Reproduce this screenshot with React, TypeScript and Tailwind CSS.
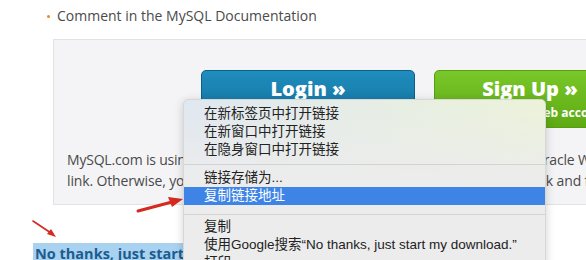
import React from 'react';

const menuGroups: string[][] = [
  ['在新标签页中打开链接', '在新窗口中打开链接', '在隐身窗口中打开链接'],
  ['链接存储为...', '复制链接地址'],
  ['复制', '使用Google搜索“No thanks, just start my download.”', '打印'],
];

const App: React.FC = () => {
  return (
    <div className="relative w-[586px] h-[260px] overflow-hidden bg-white font-['Open_Sans',sans-serif]">
      {/* bullet line */}
      <div className="flex items-center h-[20px] mt-[5px] pl-[47px] text-[14px] text-[#4a4a4a]">
        <span className="w-[3px] h-[3px] rounded-full bg-[#e8892b] mr-[7px] mt-[2px]"></span>
        <span>Comment in the MySQL Documentation</span>
      </div>

      {/* login panel */}
      <div className="ml-[53px] mt-[14px] w-[700px] h-[166px] bg-[#f4f4f6] border border-[#e2e2e4] pt-[30px] pl-[13px]">
        <div className="flex gap-[19px] pl-[134px]">
          <div className="w-[214px] h-[58px] rounded-[5px] bg-linear-to-b from-[#1f8dbd] to-[#0f6e9b] border border-[#0c5f87] flex flex-col items-center text-white">
            <div className="mt-[6px] text-[20px] leading-[24px] font-extrabold">Login »</div>
            <div className="mt-[4px] text-[12px] font-bold leading-[16px]">using my Oracle Web account</div>
          </div>
          <div className="w-[214px] h-[58px] rounded-[5px] bg-linear-to-b from-[#79c72a] to-[#5eaa12] border border-[#569e10] flex flex-col items-center pr-[22px] text-white">
            <div className="mt-[6px] text-[20px] leading-[24px] font-extrabold">Sign Up »</div>
            <div className="mt-[4px] text-[12px] font-bold leading-[16px]">for an Oracle Web account</div>
          </div>
        </div>
        <div className="mt-[21px] text-[14px] leading-[21px] text-[#4a4a4a] whitespace-nowrap">
          <div className="tracking-[-0.2px]">MySQL.com is using Oracle SSO for authentication. If you already have an Oracle Web account, click the Login</div>
          <div className="tracking-[-0.14px]">link. Otherwise, you can signup for a free account by clicking the Sign Up link and following the instructions.</div>
        </div>
      </div>

      {/* skip link */}
      <div className="mt-[36px] pl-[33px]">
        <span className="bg-[#a9d2f1] px-[2px] py-[1px] text-[14.5px] leading-[18px] font-bold text-[#1c5d8f] underline whitespace-nowrap">
          No thanks, just start my download.
        </span>
      </div>

      {/* red arrows */}
      <svg className="absolute left-0 top-0" width="586" height="260">
        <line x1="138" y1="211" x2="172" y2="202" stroke="#d42a20" strokeWidth="3" strokeLinecap="round" />
        <polygon points="183,199 168,197 172,207" fill="#d42a20" />
        <line x1="33" y1="221" x2="51" y2="233" stroke="#d42a20" strokeWidth="1.6" strokeLinecap="round" />
        <polygon points="56,237 47,234 51,229" fill="#d42a20" />
      </svg>

      {/* context menu */}
      <div className="absolute left-[183px] top-[99px] w-[363px] h-[200px] rounded-t-[5px] border border-[#d6d8d6] shadow-[0_2px_10px_rgba(0,0,0,0.18)] pt-[5px] bg-[linear-gradient(to_bottom,rgba(236,236,236,0)_0px,#ececec_80px),linear-gradient(to_right,#dfe7f1,#ecf3d8)] font-['Liberation_Sans','Noto_Sans_CJK_SC',sans-serif] text-[13.5px] text-[#222]">
        {menuGroups.map((group, gi) => (
          <div key={gi}>
            {gi > 0 && (
              <div className={gi === 1 ? 'pt-[5px] pb-[4px]' : 'pt-[9px] pb-[3px]'}>
                <div className="h-px bg-[#d3d3d3]"></div>
              </div>
            )}
            {group.map((item) => (
              <div
                key={item}
                className={`h-[18px] leading-[18px] pl-[20px] whitespace-nowrap ${
                  item === '复制链接地址' ? 'bg-[#3d84e6] text-white' : ''
                }`}
              >
                {item}
              </div>
            ))}
          </div>
        ))}
      </div>
    </div>
  );
};

export default App;
